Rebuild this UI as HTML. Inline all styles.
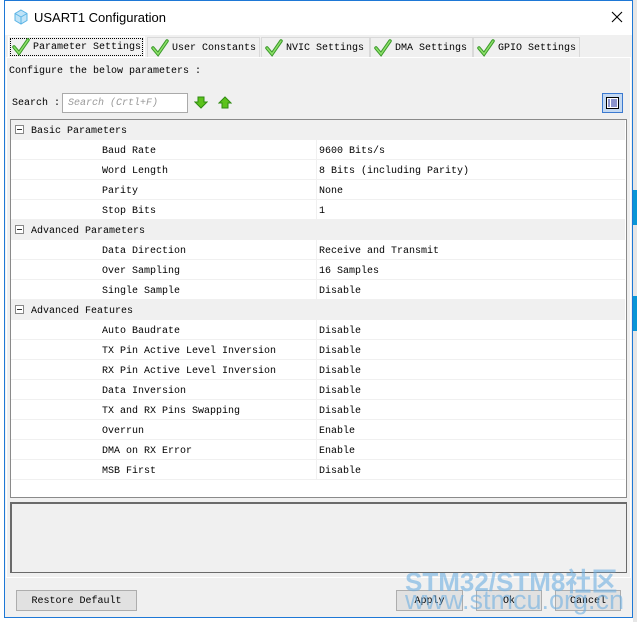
<!DOCTYPE html>
<html><head><meta charset="utf-8"><style>
*{margin:0;padding:0;box-sizing:border-box}
body{width:637px;height:622px;background:#fff;position:relative;overflow:hidden;font-family:"Liberation Mono",monospace;font-size:10px;color:#000}
.abs{position:absolute}
#win{left:4px;top:0;width:629px;height:618px;border:1px solid #1e78d6;background:#f0f0f0}
#tb{left:5px;top:1px;width:627px;height:34px;background:#fff}
.tab{position:absolute;top:37px;height:20px;border:1px solid #d9d9d9;border-bottom:none;background:#f0f0f0;line-height:22px;padding-left:24px;white-space:nowrap}
.tab svg{position:absolute;left:3px;top:1px}
.row{position:absolute;left:11px;width:614px;height:20px;line-height:23px;background:#fff;border-bottom:1px solid #f0f0f0}
.row .k{position:absolute;left:91px}
.row .v{position:absolute;left:308px}
.row .d{position:absolute;left:305px;top:0;width:1px;height:20px;background:#f0f0f0}
.grp{position:absolute;left:11px;width:614px;height:20px;line-height:23px;background:#f0f0f0}
.grp .b{position:absolute;left:4px;top:5px;width:9px;height:9px;border:1px solid #888;background:#fff}
.grp .b:after{content:"";position:absolute;left:1px;top:3px;width:5px;height:1px;background:#333}
.grp span{position:absolute;left:20px}
.btn{position:absolute;top:590px;height:21px;border:1px solid #adadad;background:#e1e1e1;text-align:center;line-height:22px}
.wm{position:absolute;font-family:"Liberation Sans",sans-serif;font-weight:bold;color:rgba(110,175,225,0.6);font-size:26px;white-space:nowrap}
</style></head><body>
<div class="abs" style="left:633px;top:0;width:4px;height:622px;background:#e6e6e6"></div>
<div class="abs" style="left:633px;top:190px;width:4px;height:35px;background:#0a96d6"></div>
<div class="abs" style="left:633px;top:296px;width:4px;height:35px;background:#0a96d6"></div>
<div id="win" class="abs"></div>
<div id="tb" class="abs"></div>
<svg class="abs" style="left:13px;top:9px" width="16" height="16" viewBox="0 0 16 16"><path d="M8 1l6 3.5v7L8 15l-6-3.5v-7z" fill="#bfe3f7" stroke="#5ab4e6"/><path d="M8 8v7M8 8l6-3.5M8 8L2 4.5" stroke="#5ab4e6" fill="none"/></svg>
<div class="abs" style="left:34px;top:10px;font-family:'Liberation Sans',sans-serif;font-size:13px">USART1 Configuration</div>
<svg class="abs" style="left:611px;top:11px" width="12" height="12"><path d="M1 1l10 10M11 1L1 11" stroke="#000" stroke-width="1.1"/></svg>
<div class="abs" style="left:6px;top:57px;width:625px;height:521px;border:1px solid #fff"></div>
<div class="tab" style="left:8px;top:36px;width:137px;height:21px;background:#f0f0f0;border-color:#fff"><div style="position:absolute;left:1px;top:1px;right:1px;bottom:1px;border:1px dotted #000"></div><svg width="18" height="18" viewBox="0 0 18 18"><path d="M2 9l5 6L16 2" stroke="#3a9a2a" stroke-width="3.5" fill="none" stroke-linecap="round"/><path d="M2 9l5 6L16 2" stroke="#8ee06a" stroke-width="1.5" fill="none" stroke-linecap="round"/></svg>Parameter Settings</div>
<div class="tab" style="left:147px;width:113px"><svg width="18" height="18" viewBox="0 0 18 18"><path d="M2 9l5 6L16 2" stroke="#3a9a2a" stroke-width="3.5" fill="none" stroke-linecap="round"/><path d="M2 9l5 6L16 2" stroke="#8ee06a" stroke-width="1.5" fill="none" stroke-linecap="round"/></svg>User Constants</div>
<div class="tab" style="left:261px;width:109px"><svg width="18" height="18" viewBox="0 0 18 18"><path d="M2 9l5 6L16 2" stroke="#3a9a2a" stroke-width="3.5" fill="none" stroke-linecap="round"/><path d="M2 9l5 6L16 2" stroke="#8ee06a" stroke-width="1.5" fill="none" stroke-linecap="round"/></svg>NVIC Settings</div>
<div class="tab" style="left:370px;width:103px"><svg width="18" height="18" viewBox="0 0 18 18"><path d="M2 9l5 6L16 2" stroke="#3a9a2a" stroke-width="3.5" fill="none" stroke-linecap="round"/><path d="M2 9l5 6L16 2" stroke="#8ee06a" stroke-width="1.5" fill="none" stroke-linecap="round"/></svg>DMA Settings</div>
<div class="tab" style="left:473px;width:107px"><svg width="18" height="18" viewBox="0 0 18 18"><path d="M2 9l5 6L16 2" stroke="#3a9a2a" stroke-width="3.5" fill="none" stroke-linecap="round"/><path d="M2 9l5 6L16 2" stroke="#8ee06a" stroke-width="1.5" fill="none" stroke-linecap="round"/></svg>GPIO Settings</div>
<div class="abs" style="left:9px;top:66px">Configure the below parameters :</div>
<div class="abs" style="left:12px;top:98px">Search :</div>
<div class="abs" style="left:62px;top:93px;width:126px;height:20px;background:#fff;border:1px solid #aaa;color:#999;font-style:italic;padding-left:5px;line-height:20px">Search (Crtl+F)</div>
<svg class="abs" style="left:194px;top:96px" width="14" height="13"><path d="M4 1h6v5h3L7 12 1 6h3z" fill="#5cc21c" stroke="#2e8a10"/></svg>
<svg class="abs" style="left:218px;top:96px" width="14" height="13"><path d="M4 12h6V7h3L7 1 1 7h3z" fill="#5cc21c" stroke="#2e8a10"/></svg>
<div class="abs" style="left:602px;top:93px;width:21px;height:20px;background:#c4d9f2;border:1px solid #3b79d0"></div>
<svg class="abs" style="left:606px;top:97px" width="13" height="12"><rect x="0.5" y="0.5" width="12" height="11" fill="#fff" stroke="#000"/><path d="M2 3h2M5 3h6M2 5h2M5 5h6M2 7h2M5 7h6M2 9h2M5 9h6" stroke="#1a2a9a"/></svg>
<div class="abs" style="left:10px;top:119px;width:617px;height:379px;border:1px solid #8a8a8a;background:#fff"></div>
<div class="grp" style="top:120px"><div class="b"></div><span>Basic Parameters</span></div>
<div class="row" style="top:140px"><span class="k">Baud Rate</span><div class="d"></div><span class="v">9600 Bits/s</span></div>
<div class="row" style="top:160px"><span class="k">Word Length</span><div class="d"></div><span class="v">8 Bits (including Parity)</span></div>
<div class="row" style="top:180px"><span class="k">Parity</span><div class="d"></div><span class="v">None</span></div>
<div class="row" style="top:200px"><span class="k">Stop Bits</span><div class="d"></div><span class="v">1</span></div>
<div class="grp" style="top:220px"><div class="b"></div><span>Advanced Parameters</span></div>
<div class="row" style="top:240px"><span class="k">Data Direction</span><div class="d"></div><span class="v">Receive and Transmit</span></div>
<div class="row" style="top:260px"><span class="k">Over Sampling</span><div class="d"></div><span class="v">16 Samples</span></div>
<div class="row" style="top:280px"><span class="k">Single Sample</span><div class="d"></div><span class="v">Disable</span></div>
<div class="grp" style="top:300px"><div class="b"></div><span>Advanced Features</span></div>
<div class="row" style="top:320px"><span class="k">Auto Baudrate</span><div class="d"></div><span class="v">Disable</span></div>
<div class="row" style="top:340px"><span class="k">TX Pin Active Level Inversion</span><div class="d"></div><span class="v">Disable</span></div>
<div class="row" style="top:360px"><span class="k">RX Pin Active Level Inversion</span><div class="d"></div><span class="v">Disable</span></div>
<div class="row" style="top:380px"><span class="k">Data Inversion</span><div class="d"></div><span class="v">Disable</span></div>
<div class="row" style="top:400px"><span class="k">TX and RX Pins Swapping</span><div class="d"></div><span class="v">Disable</span></div>
<div class="row" style="top:420px"><span class="k">Overrun</span><div class="d"></div><span class="v">Enable</span></div>
<div class="row" style="top:440px"><span class="k">DMA on RX Error</span><div class="d"></div><span class="v">Enable</span></div>
<div class="row" style="top:460px"><span class="k">MSB First</span><div class="d"></div><span class="v">Disable</span></div>
<div class="abs" style="left:10px;top:502px;width:617px;height:71px;border:2px solid #6a6a6a;border-right-width:1px;border-bottom-width:1px;background:#f0f0f0"></div>
<div class="btn" style="left:16px;width:121px">Restore Default</div>
<div class="btn" style="left:396px;width:67px">Apply</div>
<div class="btn" style="left:476px;width:66px">Ok</div>
<div class="btn" style="left:555px;width:66px">Cancel</div>
<div class="wm" style="left:405px;top:562px;font-family:'Liberation Sans','Noto Sans CJK SC',sans-serif">STM32/STM8社区</div>
<div class="wm" style="left:405px;top:585px;font-size:27px;font-weight:normal">www.stmcu.org.cn</div>
</body></html>
